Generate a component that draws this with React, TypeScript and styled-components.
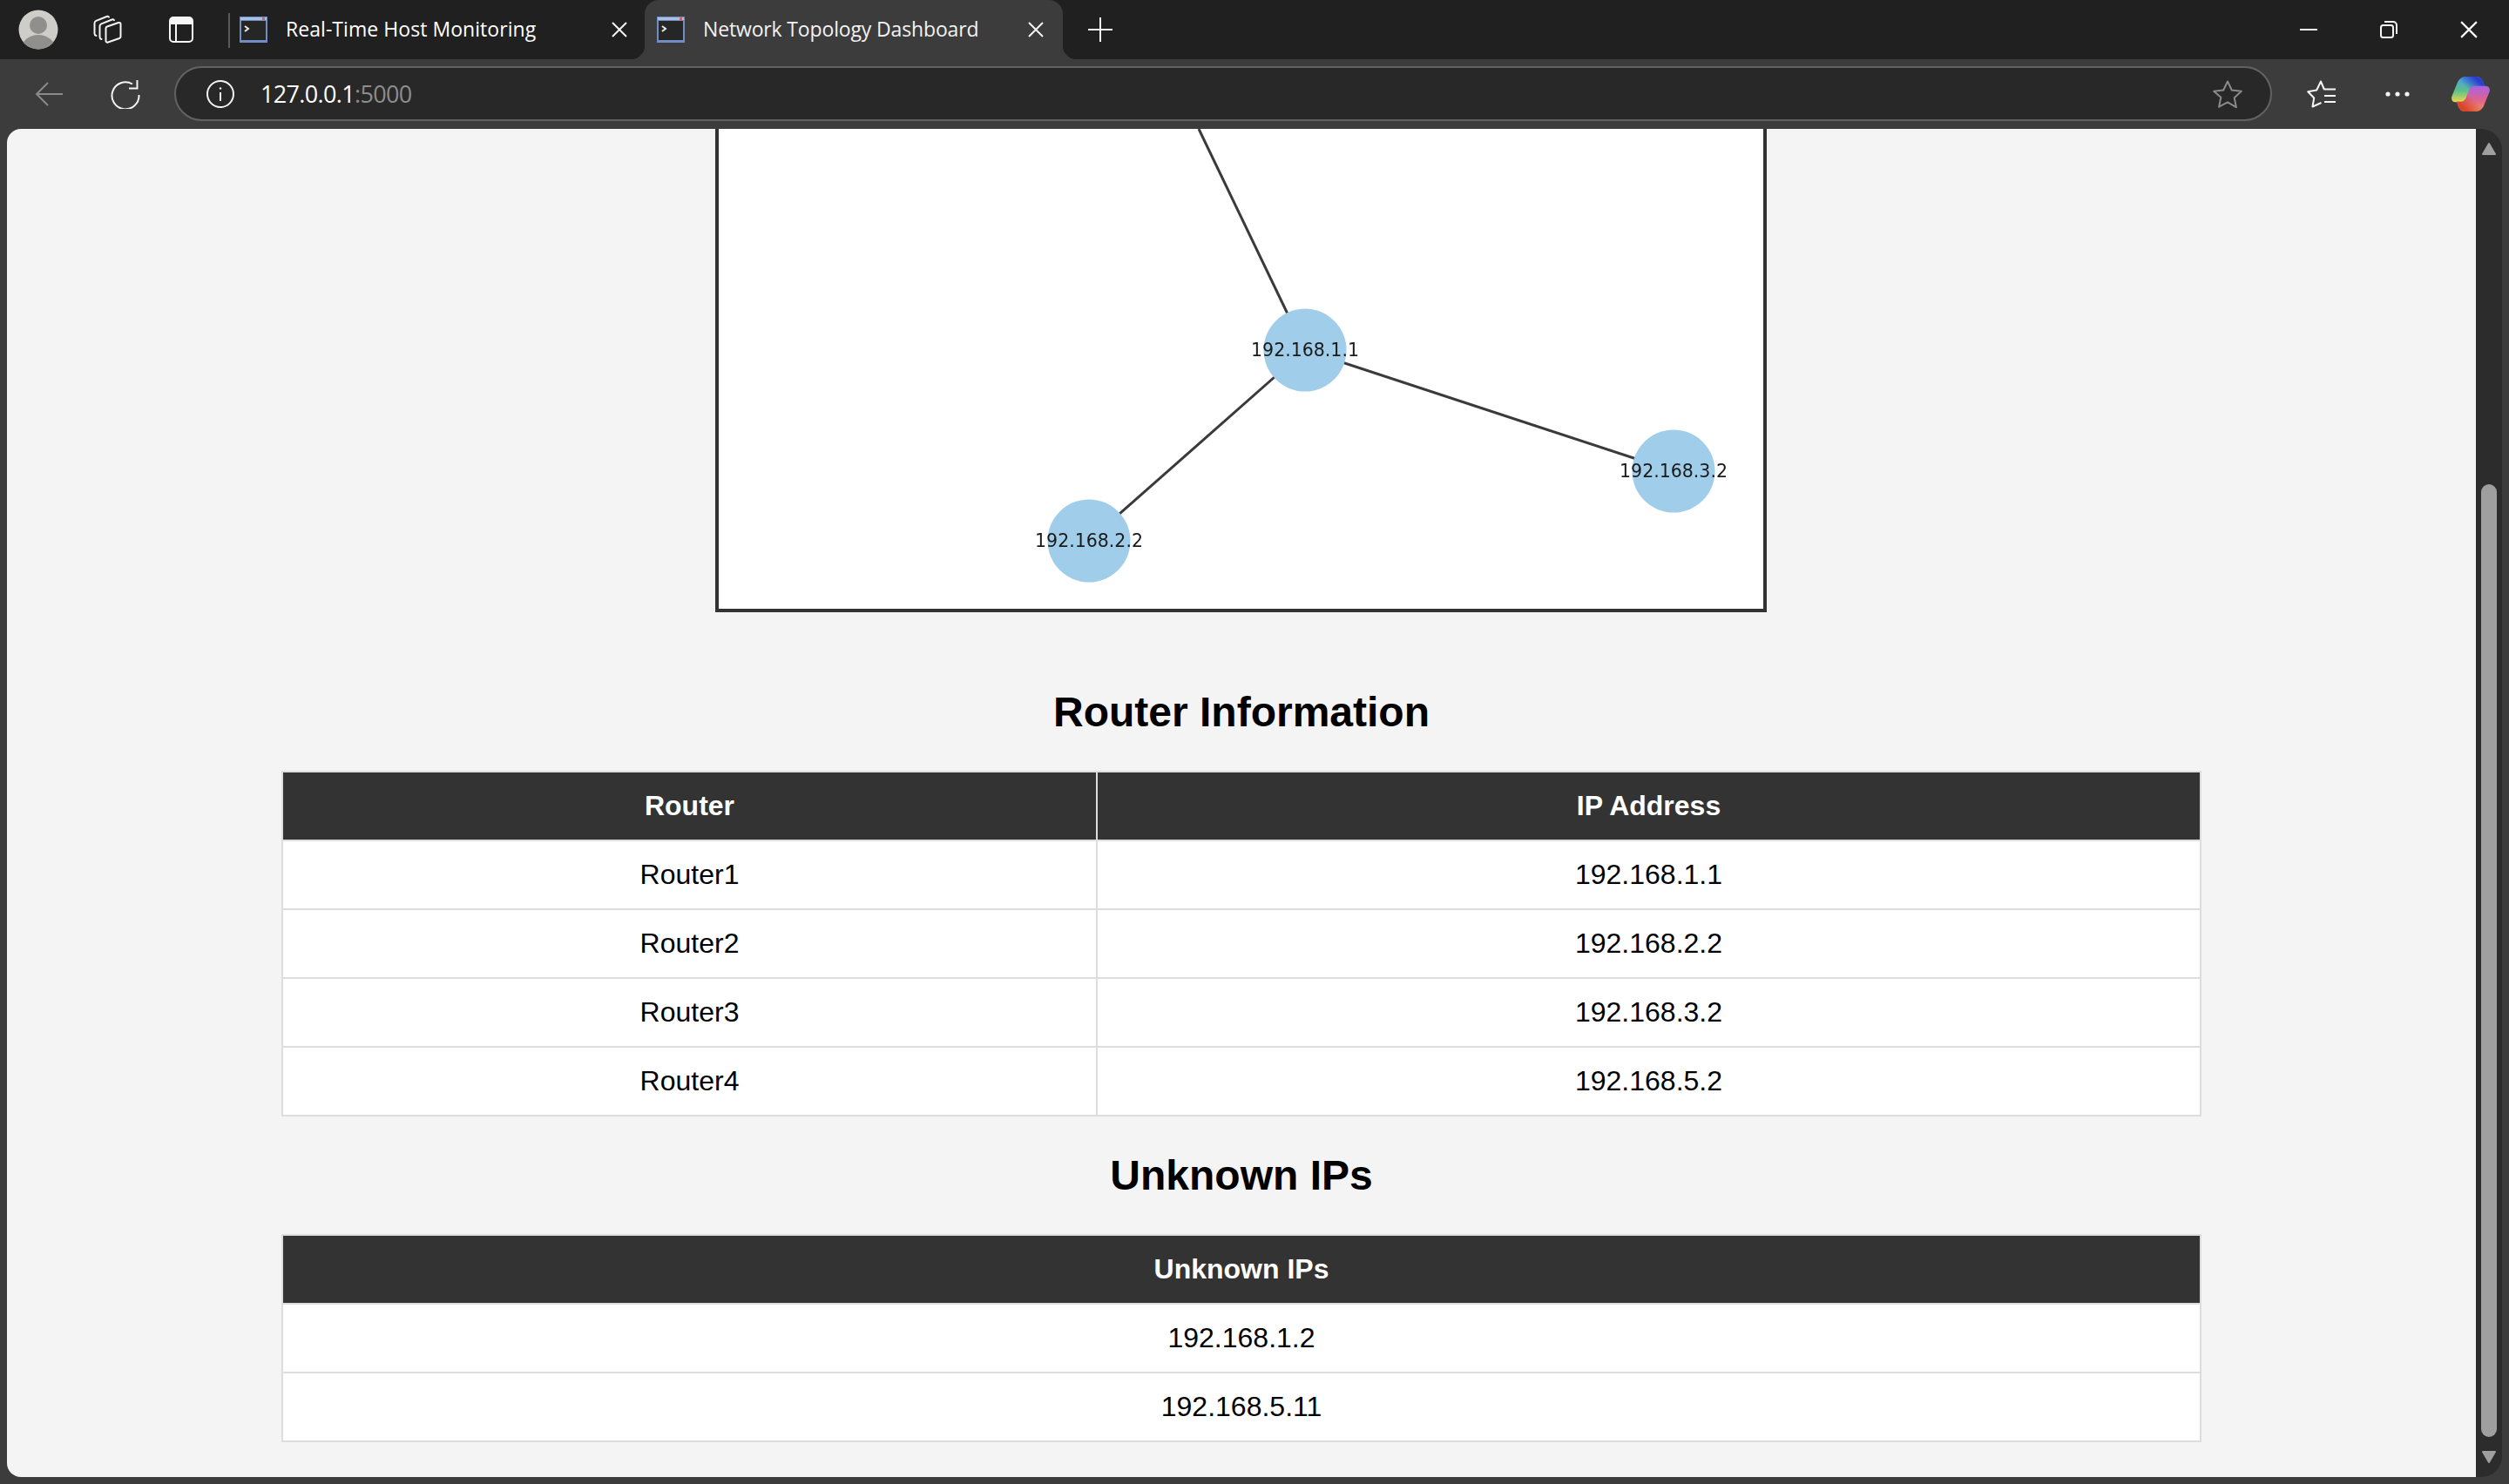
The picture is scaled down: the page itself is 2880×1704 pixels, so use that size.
import React from "react";
import styled, { createGlobalStyle } from "styled-components";

const GlobalStyle = createGlobalStyle`
  html, body { margin: 0; padding: 0; background: #3c3c3c; }
  body { font-family: "Liberation Sans", Arial, sans-serif; overflow: hidden; }
  * { box-sizing: border-box; }
`;

const Window = styled.div`
  width: 2880px;
  height: 1704px;
  display: flex;
  flex-direction: column;
  background: #3c3c3c;
`;

/* ---------- tab strip ---------- */
const TabStrip = styled.div`
  height: 68px;
  flex: none;
  display: flex;
  align-items: stretch;
  background: #202020;
`;

const Slot = styled.div<{ $w: number }>`
  width: ${(p) => p.$w}px;
  flex: none;
  display: flex;
  align-items: center;
  justify-content: center;
`;

const Divider = styled.div`
  width: 2px;
  height: 40px;
  margin: 15px 0 0 6px;
  background: #5a5a5a;
  flex: none;
`;

const Tab = styled.div<{ $active?: boolean; $w: number }>`
  position: relative;
  width: ${(p) => p.$w}px;
  flex: none;
  display: flex;
  align-items: center;
  padding: 0 0 0 ${(p) => (p.$active ? 14 : 11)}px;
  color: ${(p) => (p.$active ? "#f2f2f2" : "#ffffff")};
  background: ${(p) => (p.$active ? "#3c3c3c" : "transparent")};
  border-radius: ${(p) => (p.$active ? "16px 16px 0 0" : "0")};
  ${(p) =>
    p.$active
      ? `
    &::before, &::after {
      content: "";
      position: absolute;
      bottom: 0;
      width: 16px;
      height: 16px;
    }
    &::before { left: -16px; background: radial-gradient(circle at 0 0, #202020 16px, #3c3c3c 16.5px); }
    &::after { right: -16px; background: radial-gradient(circle at 100% 0, #202020 16px, #3c3c3c 16.5px); }
  `
      : ""}
`;

const TabTitle = styled.span<{ $w: number; $spacing: number }>`
  width: ${(p) => p.$w}px;
  flex: none;
  margin-left: 21px;
  font-family: "Open Sans", "Noto Sans", sans-serif;
  font-size: 23px;
  letter-spacing: ${(p) => p.$spacing}px;
  white-space: nowrap;
  position: relative;
  top: -1px;
`;

const TabClose = styled.span<{ $right: number }>`
  margin-left: auto;
  margin-right: ${(p) => p.$right}px;
  display: flex;
`;

const Spacer = styled.div`
  flex: 1;
`;

const Caption = styled.div`
  width: 92px;
  flex: none;
  display: flex;
  align-items: center;
  justify-content: center;
`;

/* ---------- toolbar ---------- */
const Toolbar = styled.div`
  height: 80px;
  flex: none;
  display: flex;
  align-items: center;
  background: #3c3c3c;
`;

const NavSlot = styled.div<{ $w: number }>`
  width: ${(p) => p.$w}px;
  height: 64px;
  flex: none;
  display: flex;
  align-items: center;
  justify-content: center;
`;

const AddressBar = styled.div`
  width: 2408px;
  height: 63px;
  flex: none;
  align-self: flex-start;
  margin-top: 8px;
  display: flex;
  align-items: center;
  padding: 0 32px 0 35px;
  background: #282828;
  border: 2px solid #626262;
  border-radius: 32px;
`;

const Url = styled.div`
  margin-left: 30px;
  font-family: "Open Sans", "Noto Sans", sans-serif;
  font-size: 27px;
  letter-spacing: -0.65px;
  color: #ffffff;
  flex: 1;
  span {
    color: #8d8d8d;
  }
`;

/* ---------- viewport ---------- */
const Viewport = styled.div`
  flex: 1;
  min-height: 0;
  display: flex;
  padding: 0 8px 8px;
`;

const Page = styled.main`
  width: 2834px;
  flex: none;
  display: flex;
  flex-direction: column;
  align-items: center;
  background: #f4f4f4;
  border-radius: 16px 0 0 16px;
  overflow: hidden;
`;

const GraphFrame = styled.div`
  width: 1207px;
  height: 555px;
  flex: none;
  margin-left: -1px;
  background: #ffffff;
  border: 4px solid #333333;
  border-top: none;
`;

const GraphSvg = styled.svg`
  display: block;
  width: 1199px;
  height: 551px;
  filter: blur(0.45px);
`;

const NodeLabel = styled.text`
  font-family: "DejaVu Sans", sans-serif;
  font-size: 20.5px;
  fill: #1a1a1a;
  text-anchor: middle;
`;

const Heading = styled.h2<{ $top: number }>`
  margin: ${(p) => p.$top}px 0 40px;
  font-size: 48px;
  font-weight: 700;
  line-height: 55px;
  color: #000000;
`;

const Table = styled.table`
  width: 2204px;
  flex: none;
  table-layout: fixed;
  border-collapse: collapse;
  background: #ffffff;
  font-size: 32px;
`;

const Th = styled.th<{ $w?: number }>`
  width: ${(p) => (p.$w ? `${p.$w}px` : "auto")};
  padding: 20px;
  line-height: 37px;
  background: #333333;
  color: #ffffff;
  border: 2px solid #dddddd;
  font-weight: 700;
  text-align: center;
`;

const Td = styled.td`
  padding: 20px;
  line-height: 37px;
  color: #000000;
  border: 2px solid #dddddd;
  text-align: center;
`;

/* ---------- scrollbar ---------- */
const ScrollBar = styled.div`
  width: 30px;
  flex: none;
  display: flex;
  flex-direction: column;
  align-items: center;
  padding: 16px 0;
  background: #2c2c2c;
  border-radius: 0 24px 24px 0;
`;

const ScrollThumb = styled.div`
  width: 18px;
  height: 1094px;
  flex: none;
  margin: auto 0 16px;
  background: #9f9f9f;
  border-radius: 9px;
`;

/* ---------- drawings ---------- */
const Favicon = () => (
  <svg width="32" height="30" viewBox="0 0 32 30">
    <rect x="0" y="0" width="32" height="30" fill="#6f8fc4" />
    <rect x="1" y="1" width="30" height="3" fill="#a9c0e6" />
    <rect x="26" y="1" width="3" height="3" fill="#d9605a" />
    <rect x="2" y="5" width="28" height="22" fill="#262626" />
    <path d="M6 11l4 3-4 3" stroke="#e8e8e8" strokeWidth="2" fill="none" />
  </svg>
);

const CloseIcon = ({ size = 18 }: { size?: number }) => (
  <svg width={size} height={size} viewBox="0 0 18 18">
    <path d="M1 1l16 16M17 1L1 17" stroke="#f4f4f4" strokeWidth="2" fill="none" />
  </svg>
);

const Avatar = () => (
  <svg width="46" height="46" viewBox="0 0 46 46">
    <defs>
      <clipPath id="avatarClip">
        <circle cx="23" cy="23" r="22.5" />
      </clipPath>
    </defs>
    <circle cx="23" cy="23" r="22.5" fill="#cfcdc8" />
    <g clipPath="url(#avatarClip)">
      <circle cx="23" cy="18" r="10" fill="#8f8f8d" />
      <ellipse cx="23" cy="44" rx="19" ry="15" fill="#8f8f8d" />
    </g>
  </svg>
);

const CollectionsIcon = () => (
  <svg width="34" height="34" viewBox="0 0 34 34" fill="none" stroke="#f4f4f4" strokeWidth="2" strokeLinejoin="round">
    <path d="M3.500 24c-1.300-.4-2-1.200-2-2.500V9.500c0-1.300.6-2.100 1.800-2.600L15.500 2c1-.4 1.800-.2 2.500.6" strokeLinecap="round" />
    <path d="M9.500 28c-1.300-.4-2-1.200-2-2.500V13c0-1.300.6-2.100 1.800-2.600L21.500 5.500c1-.4 1.800-.2 2.500.6" strokeLinecap="round" />
    <path d="M14.500 15.500c0-1 .5-1.700 1.500-2l13-4.500c1.300-.4 2.500.3 2.500 1.700V25c0 1-.5 1.600-1.500 2L17 31.500c-1.300.4-2.500-.2-2.500-1.500z" />
  </svg>
);

const VerticalTabsIcon = () => (
  <svg width="28" height="30" viewBox="0 0 28 30">
    <path d="M5 1h18a4 4 0 0 1 4 4v4H1V5a4 4 0 0 1 4-4z" fill="#f6f6f6" />
    <rect x="1" y="1" width="26" height="28" rx="4" fill="none" stroke="#f6f6f6" strokeWidth="2" />
    <path d="M8 8v21" stroke="#f6f6f6" strokeWidth="2" />
  </svg>
);

const PlusIcon = () => (
  <svg width="28" height="28" viewBox="0 0 28 28">
    <path d="M14 0v28M0 14h28" stroke="#f6f6f6" strokeWidth="2" />
  </svg>
);

const MinimizeIcon = () => (
  <svg width="20" height="20" viewBox="0 0 20 20">
    <path d="M0 10h20" stroke="#f4f4f4" strokeWidth="2" />
  </svg>
);

const RestoreIcon = () => (
  <svg width="20" height="20" viewBox="0 0 20 20" fill="none" stroke="#f4f4f4" strokeWidth="2">
    <rect x="1" y="5" width="14" height="14" rx="2.500" />
    <path d="M5 1h10a4 4 0 0 1 4 4v10" />
  </svg>
);

const BackIcon = () => (
  <svg width="32" height="28" viewBox="0 0 32 28" fill="none" stroke="#8a8a8a" strokeWidth="2">
    <path d="M32 14H2M15 1L2 14l13 13" />
  </svg>
);

const RefreshIcon = () => (
  <svg width="34" height="34" viewBox="0 0 34 34" fill="none" stroke="#f4f4f4" strokeWidth="2">
    <path d="M25 5.500A15.500 15.500 0 1 0 32.500 18" />
    <path d="M30.500 1v9.500H21" />
  </svg>
);

const InfoIcon = () => (
  <svg width="32" height="32" viewBox="0 0 32 32" fill="none" stroke="#f4f4f4" strokeWidth="2">
    <circle cx="16" cy="16" r="15" />
    <path d="M16 14v10" />
    <circle cx="16" cy="9.500" r="1.200" fill="#f4f4f4" stroke="none" />
  </svg>
);

const StarIcon = () => (
  <svg width="34" height="32" viewBox="0 0 34 32" fill="none" stroke="#8a8a8a" strokeWidth="2" strokeLinejoin="round">
    <path d="M17 1.500l4.800 10 11 1.300-8.100 7.500 2.200 10.900L17 25.300 7.100 30.700l2.200-10.900L1.200 12.800l11-1.300z" />
  </svg>
);

const FavoritesIcon = () => (
  <svg width="34" height="32" viewBox="0 0 34 32" fill="none" stroke="#f6f6f6" strokeWidth="2" strokeLinejoin="round">
    <path d="M20 11L16 1.500l-4.800 10-10 1.800 7 7.200L6.500 30.500l10-4.500" />
    <path d="M20 10.500h13M20 18h13M20 25h13" />
  </svg>
);

const DotsIcon = () => (
  <svg width="28" height="6" viewBox="0 0 28 6" fill="#f4f4f4">
    <circle cx="3" cy="3" r="2.600" />
    <circle cx="14" cy="3" r="2.600" />
    <circle cx="25" cy="3" r="2.600" />
  </svg>
);

const lobe =
  "M50 0H84C98 0 106 8 110 22L114 34H100C90 34 84 40 80 52L70 78C66 85 60 88 52 88H14C4 88 -2 80 1 68L20 22C25 8 36 0 50 0Z";

const CopilotLogo = () => (
  <svg width="44" height="40" viewBox="0 0 132 120">
    <defs>
      <linearGradient id="lobeA" x1="0" y1="0" x2="0" y2="1">
        <stop offset="0" stopColor="#4aa0ea" />
        <stop offset="0.55" stopColor="#5cc08a" />
        <stop offset="1" stopColor="#ecd94a" />
      </linearGradient>
      <linearGradient id="lobeAShade" x1="0.5" y1="0.5" x2="1" y2="0.1">
        <stop offset="0" stopColor="#2a3fd0" stopOpacity="0" />
        <stop offset="0.7" stopColor="#2a3fd0" />
      </linearGradient>
      <linearGradient id="lobeB" x1="0" y1="1" x2="0" y2="0">
        <stop offset="0" stopColor="#a763e2" />
        <stop offset="0.55" stopColor="#e0628f" />
        <stop offset="1" stopColor="#f0935a" />
      </linearGradient>
      <linearGradient id="lobeBShade" x1="0.5" y1="0.5" x2="1" y2="0.1">
        <stop offset="0" stopColor="#d8452a" stopOpacity="0" />
        <stop offset="0.7" stopColor="#d8452a" />
      </linearGradient>
    </defs>
    <path d={lobe} fill="url(#lobeA)" />
    <path d={lobe} fill="url(#lobeAShade)" />
    <g transform="rotate(180 66 60)">
      <path d={lobe} fill="url(#lobeB)" />
      <path d={lobe} fill="url(#lobeBShade)" />
    </g>
  </svg>
);

const Arrow = ({ down }: { down?: boolean }) => (
  <svg width="18" height="14" viewBox="0 0 18 14">
    <path
      d={down ? "M2 1h14l-7 12z" : "M2 13h14L9 1z"}
      fill="#9f9f9f"
      stroke="#9f9f9f"
      strokeWidth="2"
      strokeLinejoin="round"
    />
  </svg>
);

const routers = [
  ["Router1", "192.168.1.1"],
  ["Router2", "192.168.2.2"],
  ["Router3", "192.168.3.2"],
  ["Router4", "192.168.5.2"],
];

const unknownIps = ["192.168.1.2", "192.168.5.11"];

// node centres, in the coordinates of the graph image
const nodes = [
  { ip: "192.168.1.1", x: 673, y: 254 },
  { ip: "192.168.2.2", x: 425, y: 473 },
  { ip: "192.168.3.2", x: 1096, y: 393 },
];

const Graph = () => (
  <GraphSvg viewBox="0 0 1199 551">
    <g stroke="#3a3a3a" strokeWidth="3">
      <line x1="551" y1="0" x2="673" y2="254" />
      <line x1="673" y1="254" x2="425" y2="473" />
      <line x1="673" y1="254" x2="1096" y2="393" />
    </g>
    {nodes.map((n) => (
      <circle key={n.ip} cx={n.x} cy={n.y} r="47.500" fill="#a0cde9" />
    ))}
    {nodes.map((n) => (
      <NodeLabel key={n.ip} x={n.x} y={n.y + 7}>
        {n.ip}
      </NodeLabel>
    ))}
  </GraphSvg>
);

const App = () => {
  return (
    <Window>
      <GlobalStyle />
      <TabStrip>
        <Slot $w={88}>
          <Avatar />
        </Slot>
        <Slot $w={72}>
          <CollectionsIcon />
        </Slot>
        <Slot $w={96}>
          <VerticalTabsIcon />
        </Slot>
        <Divider />
        <Tab $w={476}>
          <Favicon />
          <TabTitle $w={290} $spacing={0.05}>
            Real-Time Host Monitoring
          </TabTitle>
          <TabClose $right={20}>
            <CloseIcon />
          </TabClose>
        </Tab>
        <Tab $active $w={480}>
          <Favicon />
          <TabTitle $w={320} $spacing={-0.15}>
            Network Topology Dashboard
          </TabTitle>
          <TabClose $right={22}>
            <CloseIcon />
          </TabClose>
        </Tab>
        <Slot $w={86}>
          <PlusIcon />
        </Slot>
        <Spacer />
        <Caption>
          <MinimizeIcon />
        </Caption>
        <Caption>
          <RestoreIcon />
        </Caption>
        <Caption>
          <CloseIcon size={20} />
        </Caption>
      </TabStrip>
      <Toolbar>
        <NavSlot $w={112}>
          <BackIcon />
        </NavSlot>
        <NavSlot $w={64}>
          <RefreshIcon />
        </NavSlot>
        <NavSlot $w={24} />
        <AddressBar>
          <InfoIcon />
          <Url>
            127.0.0.1<span>:5000</span>
          </Url>
          <StarIcon />
        </AddressBar>
        <NavSlot $w={114}>
          <FavoritesIcon />
        </NavSlot>
        <NavSlot $w={60}>
          <DotsIcon />
        </NavSlot>
        <NavSlot $w={108}>
          <CopilotLogo />
        </NavSlot>
      </Toolbar>
      <Viewport>
        <Page>
          <GraphFrame>
            <Graph />
          </GraphFrame>
          <Heading $top={87}>Router Information</Heading>
          <Table>
            <thead>
              <tr>
                <Th $w={935}>Router</Th>
                <Th>IP Address</Th>
              </tr>
            </thead>
            <tbody>
              {routers.map(([name, ip]) => (
                <tr key={name}>
                  <Td>{name}</Td>
                  <Td>{ip}</Td>
                </tr>
              ))}
            </tbody>
          </Table>
          <Heading $top={40}>Unknown IPs</Heading>
          <Table>
            <thead>
              <tr>
                <Th>Unknown IPs</Th>
              </tr>
            </thead>
            <tbody>
              {unknownIps.map((ip) => (
                <tr key={ip}>
                  <Td>{ip}</Td>
                </tr>
              ))}
            </tbody>
          </Table>
        </Page>
        <ScrollBar>
          <Arrow />
          <ScrollThumb />
          <Arrow down />
        </ScrollBar>
      </Viewport>
    </Window>
  );
};

export default App;
